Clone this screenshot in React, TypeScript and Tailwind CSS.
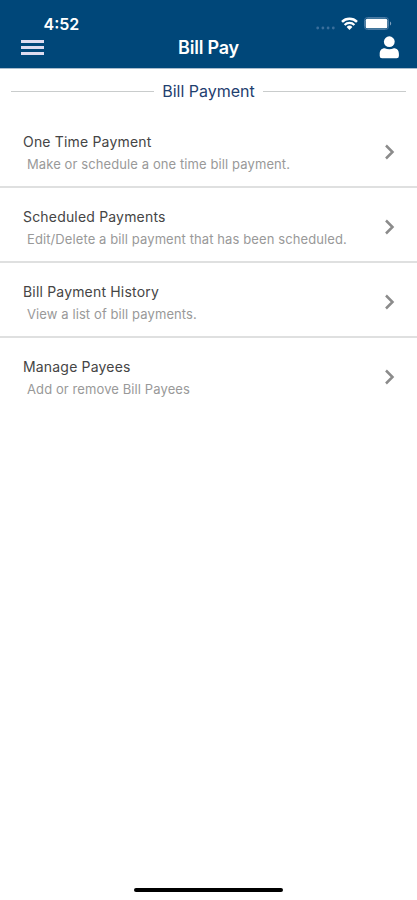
const items = [
  { title: 'One Time Payment', text: 'Make or schedule a one time bill payment.' },
  { title: 'Scheduled Payments', text: 'Edit/Delete a bill payment that has been scheduled.' },
  { title: 'Bill Payment History', text: 'View a list of bill payments.' },
  { title: 'Manage Payees', text: 'Add or remove Bill Payees' },
];

function StatusBar() {
  return (
    <div className="flex h-9 items-start justify-between pt-[15px] pr-[25px] pl-[43.5px]">
      <span className="text-base leading-[19px] font-semibold">4:52</span>
      <div className="flex items-center pt-[2px]">
        <svg className="mt-[9px] mr-[6px]" width="19" height="4" viewBox="0 0 19 4" fill="#3a6f9c">
          <circle cx="1.7" cy="2" r="1.4" />
          <circle cx="6.9" cy="2" r="1.4" />
          <circle cx="12.1" cy="2" r="1.4" />
          <circle cx="17.3" cy="2" r="1.4" />
        </svg>
        <svg className="mr-[6px]" width="17" height="13" viewBox="0 0 17 13" fill="none" stroke="white">
          <path d="M1 4.8a10.6 10.6 0 0 1 15 0" strokeWidth="2.5" />
          <path d="M3.6 7.9a6.900 6.900 0 0 1 9.800 0" strokeWidth="2.2" />
          <path d="M8.5 13 5.6 10a4.100 4.100 0 0 1 5.800 0z" fill="white" stroke="none" />
        </svg>
        <svg width="28" height="13" viewBox="0 0 28 13">
          <rect x="0.5" y="0.5" width="24" height="12" rx="3" fill="none" stroke="#4b7ba4" />
          <rect x="1.7" y="1.7" width="21.6" height="9.6" rx="1.5" fill="white" />
          <path d="M26 4.5c1.600.8 1.600 3.200 0 4z" fill="#7fa2bf" />
        </svg>
      </div>
    </div>
  );
}

function NavBar() {
  return (
    <div className="grid h-8 grid-cols-[1fr_auto_1fr] items-start pr-[18px] pl-[21px]">
      <button aria-label="Menu" className="mt-1 flex w-[23px] flex-col gap-[3.5px]">
        <span className="h-[2.5px] w-full bg-[#dedcf0]" />
        <span className="h-[2.5px] w-full bg-[#dedcf0]" />
        <span className="h-[2.5px] w-full bg-[#dedcf0]" />
      </button>
      <h1 className="pt-[1px] pr-[3px] text-lg leading-[22px] font-semibold tracking-[-0.2px]">Bill Pay</h1>
      <button aria-label="Profile" className="justify-self-end">
        <svg width="20" height="23" viewBox="0 0 20 23" fill="white">
          <circle cx="10.3" cy="5.7" r="5.4" />
          <path d="M.7 18c0-3.600 2-5.700 5-5.700q4.600 1.800 9.200 0c3 0 5 2.100 5 5.700v1.900q0 2.300-2.300 2.300H3q-2.300 0-2.300-2.300z" />
        </svg>
      </button>
    </div>
  );
}

export default function App() {
  return (
    <div className="flex h-[900px] w-[417px] flex-col overflow-hidden bg-white font-['Inter',sans-serif]">
      <header className="h-[68px] bg-[#004779] text-white">
        <StatusBar />
        <NavBar />
      </header>

      <div className="flex h-[45px] items-center border-t border-[#a9bccd] px-[11px]">
        <div className="h-px flex-1 bg-[#c9cccc]" />
        <h2 className="px-2 text-base leading-6 text-[#1f406f]">Bill Payment</h2>
        <div className="h-px flex-1 bg-[#c9cccc]" />
      </div>

      <ul>
        {items.map(item => (
          <li
            key={item.title}
            className="flex h-[75px] items-center justify-between border-b-2 border-[#dfe0e0] pt-[5px] pr-[21px] pl-[23px] last:border-transparent"
          >
            <div className="pt-px">
              <h3 className="text-sm leading-[23px] tracking-[0.18px] text-[#454545]">{item.title}</h3>
              <p className="pl-1 text-[13px] leading-[23px] tracking-[0.1px] text-[#999999]">{item.text}</p>
            </div>
            <svg width="12" height="16" viewBox="0 0 12 16" fill="none" stroke="#8b8b8b" strokeWidth="2.5">
              <path d="m2 1.5 6.500 6.500L2 14.500" />
            </svg>
          </li>
        ))}
      </ul>

      <div className="mx-auto mt-auto mb-2 h-1 w-[149px] rounded-full bg-black" />
    </div>
  );
}
